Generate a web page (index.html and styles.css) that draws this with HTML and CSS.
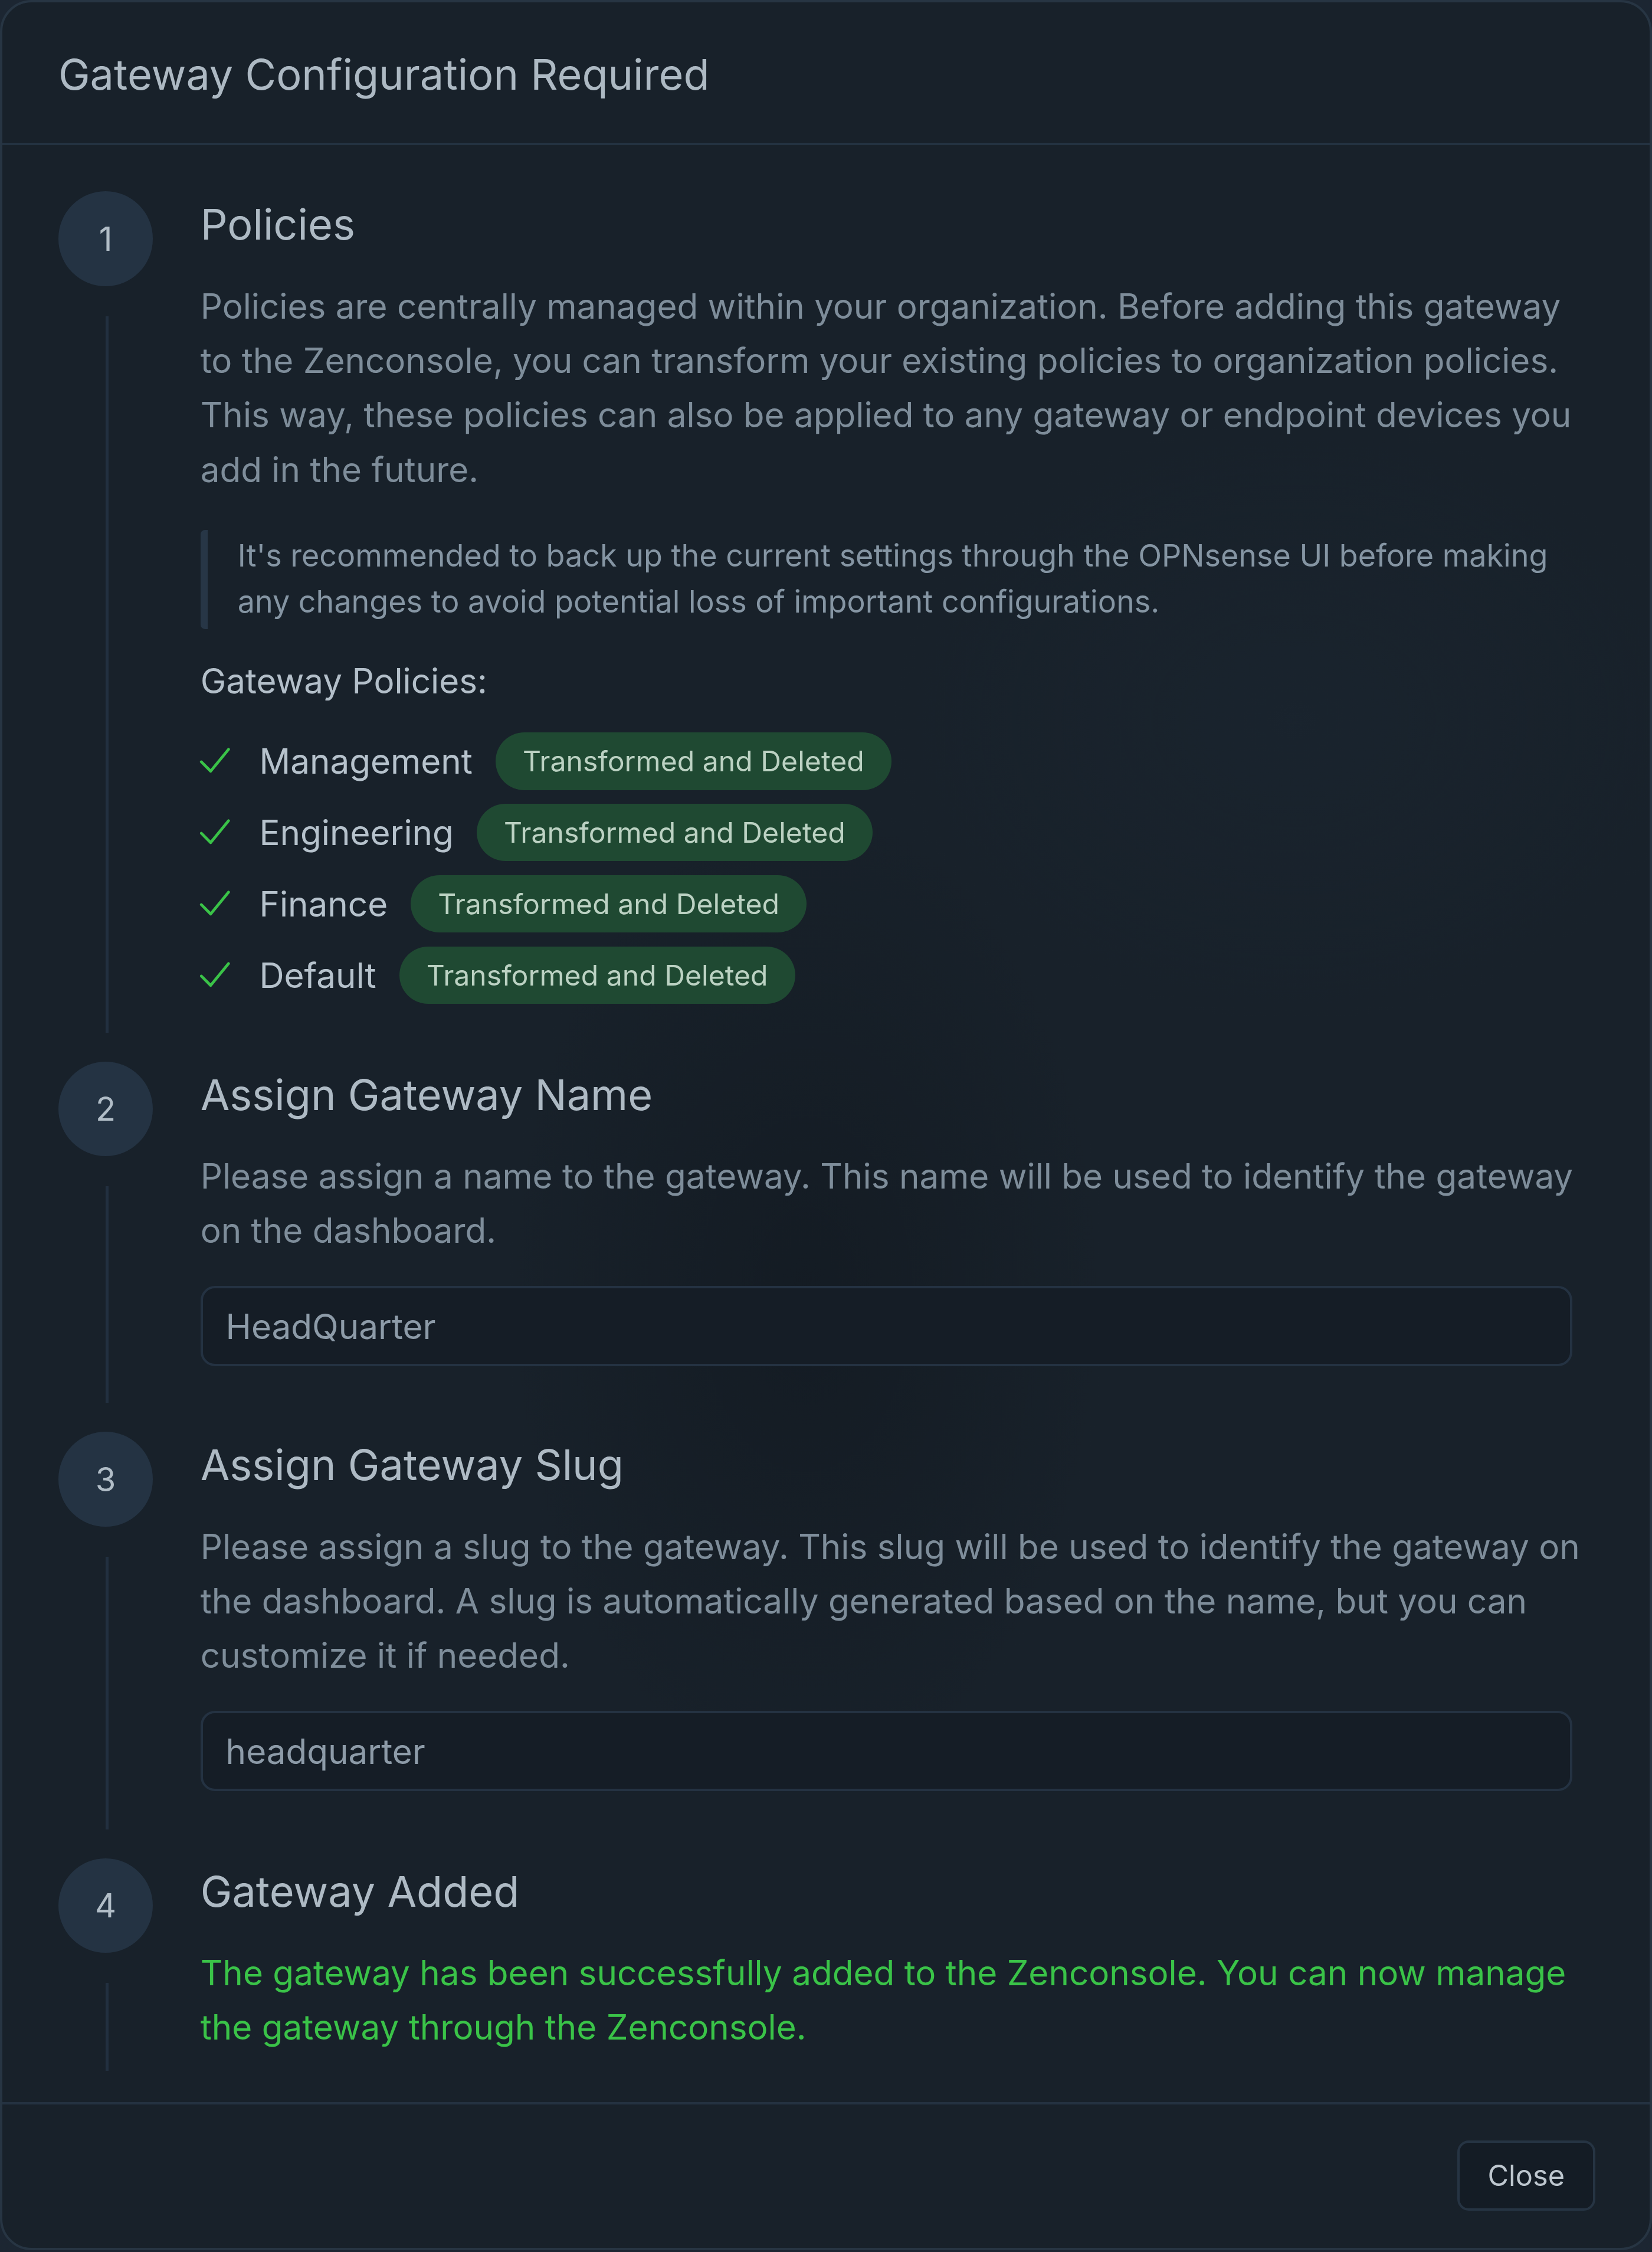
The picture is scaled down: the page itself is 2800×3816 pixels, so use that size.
FILE: index.html
```html
<!DOCTYPE html>
<html lang="en">
<head>
<meta charset="utf-8">
<title>Gateway Configuration Required</title>
<link rel="stylesheet" href="styles.css">
</head>
<body>
<div class="modal">
  <header class="modal-header">
    <h2 class="modal-title">Gateway Configuration Required</h2>
  </header>
  <div class="modal-body">
    <ol class="steps">
      <li class="step step-policies">
        <div class="step-rail"><span class="step-num">1</span><span class="step-line"></span></div>
        <div class="step-content">
          <h3 class="step-title">Policies</h3>
          <p class="step-text">Policies are centrally managed within your organization. Before adding this gateway to the Zenconsole, you can transform your existing policies to organization policies. This way, these policies can also be applied to any gateway or endpoint devices you add in the future.</p>
          <blockquote class="note">It's recommended to back up the current settings through the OPNsense UI before making any changes to avoid potential loss of important configurations.</blockquote>
          <div class="policies-label">Gateway Policies:</div>
          <ul class="policy-list">
            <li class="policy"><svg class="check" viewBox="0 0 24 24"><polyline points="3.5 12.5 9.5 18.5 21 4.5"/></svg><span class="policy-name">Management</span><span class="badge">Transformed and Deleted</span></li>
            <li class="policy"><svg class="check" viewBox="0 0 24 24"><polyline points="3.5 12.5 9.5 18.5 21 4.5"/></svg><span class="policy-name">Engineering</span><span class="badge">Transformed and Deleted</span></li>
            <li class="policy"><svg class="check" viewBox="0 0 24 24"><polyline points="3.5 12.5 9.5 18.5 21 4.5"/></svg><span class="policy-name">Finance</span><span class="badge">Transformed and Deleted</span></li>
            <li class="policy"><svg class="check" viewBox="0 0 24 24"><polyline points="3.5 12.5 9.5 18.5 21 4.5"/></svg><span class="policy-name">Default</span><span class="badge">Transformed and Deleted</span></li>
          </ul>
        </div>
      </li>
      <li class="step step-name">
        <div class="step-rail"><span class="step-num">2</span><span class="step-line"></span></div>
        <div class="step-content">
          <h3 class="step-title">Assign Gateway Name</h3>
          <p class="step-text">Please assign a name to the gateway. This name will be used to identify the gateway on the dashboard.</p>
          <div class="field">HeadQuarter</div>
        </div>
      </li>
      <li class="step step-slug">
        <div class="step-rail"><span class="step-num">3</span><span class="step-line"></span></div>
        <div class="step-content">
          <h3 class="step-title">Assign Gateway Slug</h3>
          <p class="step-text">Please assign a slug to the gateway. This slug will be used to identify the gateway on the dashboard. A slug is automatically generated based on the name, but you can customize it if needed.</p>
          <div class="field">headquarter</div>
        </div>
      </li>
      <li class="step step-done">
        <div class="step-rail"><span class="step-num">4</span><span class="step-line"></span></div>
        <div class="step-content">
          <h3 class="step-title">Gateway Added</h3>
          <p class="step-text success">The gateway has been successfully added to the Zenconsole. You can now manage the gateway through the Zenconsole.</p>
        </div>
      </li>
    </ol>
  </div>
  <footer class="modal-footer">
    <button class="btn">Close</button>
  </footer>
</div>
</body>
</html>
```
FILE: styles.css
```css
html {
  zoom: 2.4327;
  background: #1c2632;
}
body {
  margin: 0;
  font-family: Inter, "Noto Sans", "Liberation Sans", sans-serif;
  color: #aab6c0;
}
.modal {
  border: 2px solid #273543;
  border-radius: 22px;
  background:
    radial-gradient(ellipse 300px 500px at 560px 900px, rgba(12, 17, 23, 0.35), transparent 70%),
    radial-gradient(ellipse 400px 300px at 900px 500px, rgba(28, 40, 52, 0.35), transparent 70%),
    #18212a;
  overflow: hidden;
}
.modal-header {
  padding: 32px 39px 30px;
  border-bottom: 2px solid #243241;
}
.modal-title {
  margin: 0;
  font-size: 29.6px;
  line-height: 36px;
  font-weight: 400;
  color: #adb9c3;
}
.modal-body {
  padding: 32px 42px 0 39px;
}
.steps {
  list-style: none;
  margin: 0;
  padding: 0;
}
.step {
  display: flex;
  gap: 33px;
}
.step-rail {
  width: 66px;
  flex: none;
  display: flex;
  flex-direction: column;
  align-items: center;
}
.step-num {
  width: 66px;
  height: 66px;
  border-radius: 50%;
  background: #243343;
  color: #b1bdc7;
  font-size: 23px;
  display: flex;
  align-items: center;
  justify-content: center;
}
.step-line {
  flex: 1;
  width: 2px;
  margin: 21px 0 20px 2px;
  background: #223040;
}
.step-content {
  flex: 1;
  min-width: 0;
}
.step-policies .step-content { padding-bottom: 40px; }
.step-name .step-content { padding-bottom: 45.5px; }
.step-slug .step-content { padding-bottom: 46.5px; }
.step-done .step-content { padding-bottom: 33px; }
.step-done .step-line { margin-bottom: 22px; }
.step-title {
  margin: 5px 0 20px;
  font-size: 29.6px;
  line-height: 36px;
  font-weight: 400;
  color: #aebac4;
}
.step-text {
  margin: 0;
  font-size: 24px;
  line-height: 38px;
  color: #7e8d9a;
}
.step-text.success {
  color: #3ac348;
}
.note {
  margin: 23px 12px 20px 0;
  padding: 2px 0 3px 21px;
  border-left: 5px solid #273646;
  border-radius: 3px;
  font-size: 21.4px;
  line-height: 32px;
  color: #8595a3;
}
.policies-label {
  font-size: 24px;
  line-height: 32px;
  color: #b3bfc9;
  margin-bottom: 20px;
}
.policy-list {
  list-style: none;
  margin: 0;
  padding: 0;
  display: flex;
  flex-direction: column;
  gap: 9.7px;
}
.policy {
  display: flex;
  align-items: center;
  height: 40px;
}
.check {
  width: 26px;
  height: 26px;
  margin-left: -3px;
  margin-right: 18px;
  fill: none;
  stroke: #3ac348;
  stroke-width: 1.8;
  stroke-linecap: round;
  stroke-linejoin: round;
}
.policy-name {
  font-size: 24px;
  color: #b6c2cc;
  margin-right: 16px;
}
.badge {
  height: 40px;
  display: inline-flex;
  align-items: center;
  padding: 0 19px;
  border-radius: 20px;
  background: #1f4932;
  color: #bcd2c3;
  font-size: 19.8px;
}
.field {
  margin: 19.5px 12px 0 0;
  height: 56px;
  box-sizing: border-box;
  border: 2px solid #243242;
  border-radius: 10px;
  background: #151d26;
  padding: 0 16px;
  display: flex;
  align-items: center;
  font-size: 24px;
  color: #8d9ba8;
}
.modal-footer {
  border-top: 2px solid #243241;
  padding: 25px 38px 26px;
  display: flex;
  justify-content: flex-end;
}
.btn {
  width: 96px;
  height: 49px;
  box-sizing: border-box;
  border: 2px solid #263443;
  border-radius: 8px;
  background: #141c25;
  color: #bec7cf;
  font-family: Inter, "Noto Sans", sans-serif;
  font-size: 20px;
  padding: 0;
}
```
